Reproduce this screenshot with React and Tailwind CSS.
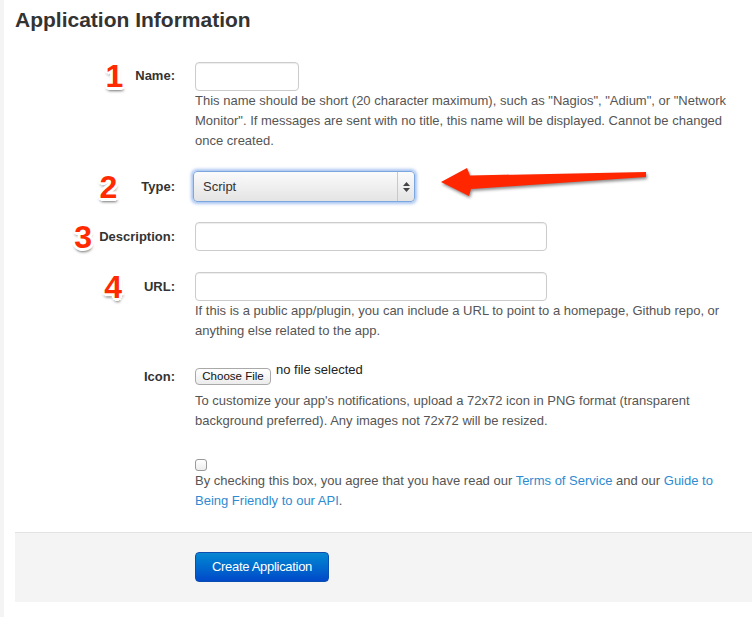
const numCls =
  "font-['Liberation_Sans',Arial,sans-serif] font-bold text-[32px] leading-none text-[#ff2a00] [text-shadow:-2px_0_0_#fff,2px_0_0_#fff,0_-2px_0_#fff,0_2px_0_#fff,-2px_-2px_0_#fff,2px_-2px_0_#fff,-2px_2px_0_#fff,2px_2px_0_#fff,-3px_0_0_#fff,3px_0_0_#fff,0_3px_0_#fff,0_-3px_0_#fff,1px_4px_3px_rgba(0,0,0,0.45),-1px_3px_3px_rgba(0,0,0,0.3)]";

function Num({ n }) {
  return <span className={numCls}>{n}</span>;
}

function Row({ label, num, numGap = "mr-[10px]", labelH = "h-[28px]", className = "", children }) {
  return (
    <div className={"flex " + className}>
      <div className={"w-[160px] flex items-center justify-end " + labelH}>
        {num && <span className={numGap + " mt-[2px]"}><Num n={num} /></span>}
        <label className="font-bold text-[13px] text-[#333]">{label}</label>
      </div>
      <div className="ml-[20px] w-[548px]">{children}</div>
    </div>
  );
}

const inputCls =
  "block h-[29px] rounded-[4px] border border-[#cccccc] bg-white shadow-[inset_0_1px_1px_rgba(0,0,0,0.075)]";

const helpCls = "text-[13px] leading-[20px] text-[#555]";

export default function App() {
  return (
    <div className="relative min-h-[617px] bg-white border-l-4 border-[#f4f4f4] pl-[11px] font-['Liberation_Sans',Arial,sans-serif]">
      <h2 className="pt-[8px] text-[21px] leading-[24px] font-bold text-[#333]">Application Information</h2>

      <div className="mt-[30px]">
        <Row label="Name:" num="1" numGap="mr-[12px]" className="mb-[20px]">
          <div className={inputCls + " w-[104px] h-[28px]"}></div>
          <p className={helpCls}>
            This name should be short (20 character maximum), such as "Nagios", "Adium", or "Network Monitor". If
            messages are sent with no title, this name will be displayed. Cannot be changed once created.
          </p>
        </Row>

        <Row label="Type:" num="2" numGap="mr-[24px]" labelH="h-[31px]" className="mb-[20px]">
          <div className="-ml-[2px] flex h-[31px] w-[222px] items-center rounded-[4px] border border-[#7ba7de] bg-gradient-to-b from-[#fbfbfb] to-[#e4e4e4] shadow-[0_0_3px_2px_rgba(100,150,230,0.55)]">
            <span className="flex-1 pl-[9px] text-[13px] text-[#333]">Script</span>
            <span className="flex h-full w-[17px] flex-col items-center justify-center gap-[2px] border-l border-[#c8c8c8]">
              <svg width="7" height="4" viewBox="0 0 7 4"><path d="M0 4 L3.5 0 L7 4 Z" fill="#444" /></svg>
              <svg width="7" height="4" viewBox="0 0 7 4"><path d="M0 0 L3.5 4 L7 0 Z" fill="#444" /></svg>
            </span>
          </div>
        </Row>

        <Row label="Description:" num="3" numGap="mr-[7px]" labelH="h-[29px]" className="mb-[21px]">
          <div className={inputCls + " w-[352px]"}></div>
        </Row>

        <Row label="URL:" num="4" numGap="mr-[22px]" labelH="h-[29px]" className="mb-[20px]">
          <div className={inputCls + " w-[352px]"}></div>
          <p className={helpCls}>
            If this is a public app/plugin, you can include a URL to point to a homepage, Github repo, or anything
            else related to the app.
          </p>
        </Row>

        <Row label="Icon:" labelH="h-[31px]" className="mb-[20px]">
          <div className="flex h-[30px] items-start">
            <span className="mt-[7px] flex h-[17px] w-[76px] items-center justify-center rounded-[4px] border border-[#a9a9a9] bg-gradient-to-b from-white to-[#ececec] text-[11.5px] text-[#111]">
              Choose File
            </span>
            <span className="ml-[5px] -mt-[1px] text-[13px] leading-[20px] text-[#222]">no file selected</span>
          </div>
          <p className={helpCls}>
            To customize your app's notifications, upload a 72x72 icon in PNG format (transparent background
            preferred). Any images not 72x72 will be resized.
          </p>
        </Row>

        <Row label="" labelH="h-[20px]">
          <span className="mt-[8px] block h-[12px] w-[12px] rounded-[3px] border border-[#9a9a9a] bg-gradient-to-b from-white to-[#ededed]"></span>
          <p className={helpCls}>
            By checking this box, you agree that you have read our <span className="text-[#2e8bd1]">Terms of Service</span> and our <span className="text-[#2e8bd1]">Guide to Being Friendly to our API</span>.
          </p>
        </Row>
      </div>

      <div className="mt-[21px] h-[70px] border-t border-[#e3e3e3] bg-[#f4f4f4] pt-[19px] pl-[180px]">
        <button className="h-[30px] w-[134px] rounded-[4px] border border-[#0a4fb0] bg-gradient-to-b from-[#0a88d2] to-[#0348c8] text-[13px] text-white tracking-[-0.3px]">
          Create Application
        </button>
      </div>

      <svg className="absolute left-[430px] top-[162px] drop-shadow-[1px_2px_1.5px_rgba(0,0,0,0.45)]" width="220" height="40" viewBox="430 162 220 40">
        <path d="M437 182 L463 168 L466 175.5 L642 172 L642 177 L467 189 L465 196 Z" fill="#ff2600" />
      </svg>
    </div>
  );
}
